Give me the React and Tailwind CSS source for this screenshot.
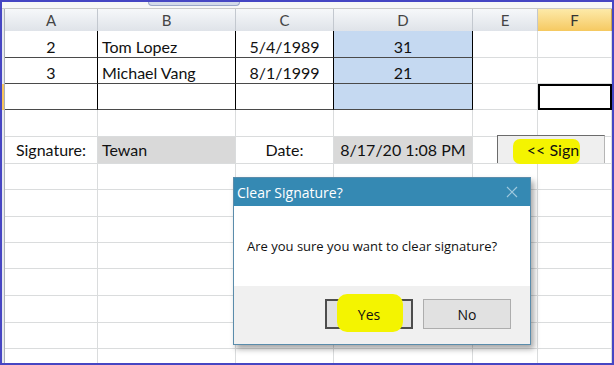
import React from 'react';

const cols = [3, 93, 138, 98, 139, 65, 74];
const rowHeights = [27, 26, 26, 27, 27, 26, 27, 26, 26, 27, 27, 26, 27];
const letters = ['A', 'B', 'C', 'D', 'E', 'F'];

// cell contents by row index (0-based data rows)
const data = {
  0: { A: '2', B: 'Tom Lopez', C: '5/4/1989', D: '31' },
  1: { A: '3', B: 'Michael Vang', C: '8/1/1999', D: '21' },
  2: {},
  4: { A: 'Signature:', B: 'Tewan', C: 'Date:', D: '8/17/20 1:08 PM' },
};

const Cell = ({ row, col, children }) => {
  const inTable = row <= 2 && col <= 3;
  const blue = row <= 2 && col === 3;
  const gray = row === 4 && (col === 1 || col === 3);
  const selected = row === 2 && col === 5;
  const align = col === 1 && children ? 'justify-start pl-[4px]' : 'justify-center';

  let cls = 'flex items-end leading-none overflow-hidden whitespace-nowrap text-[16px] text-[#111] ';
  cls += row === 4 ? 'pb-[5px] ' : 'pb-[2px] ';
  if (selected) cls += 'border-2 border-black ';
  else if (inTable) cls += 'border-r border-b border-r-black border-b-[#4a4a4a] ';
  else cls += 'border-r border-b border-[#dadcdd] ';
  if (blue) cls += 'bg-[#c5d9f1] ';
  else if (gray) cls += 'bg-[#d9d9d9] border-[#d9d9d9] ';
  else cls += 'bg-white ';

  return <div className={cls + align}>{children}</div>;
};

const App = () => {
  const template = { gridTemplateColumns: cols.map((c) => c + 'px').join(' ') };

  return (
    <div
      className="relative w-[614px] h-[365px] overflow-hidden border-2 border-[#4646c3] bg-white"
      style={{ fontFamily: 'Lato, "Open Sans", sans-serif' }}
    >
      {/* strip above the column headers */}
      <div className="h-[7px] bg-[#f7f7f7] border-b border-[#c9c9c9]"></div>

      {/* column headers */}
      <div className="grid h-[22px]" style={template}>
        <div className="bg-[#e6e9ee] border-r border-b border-[#a9afb8]"></div>
        {letters.map((l) => (
          <div
            key={l}
            className={
              'flex items-center justify-center text-[15px] border-r border-b ' +
              (l === 'F'
                ? 'bg-linear-to-b from-[#fdeaa8] to-[#f5c75c] text-[#333] border-[#c9a24c]'
                : 'bg-linear-to-b from-[#f6f8fa] to-[#dee2e8] text-[#444] border-[#c3c8cf]')
            }
          >
            {l}
          </div>
        ))}
      </div>

      {/* rows */}
      {rowHeights.map((h, r) => (
        <div key={r} className="grid" style={{ ...template, height: h }}>
          <div
            className={
              'border-r border-[#a9afb8] ' + (r === 2 ? 'bg-[#f6c55e]' : 'bg-[#e6e9ee]')
            }
          ></div>
          {letters.map((l, c) => (
            <Cell key={l} row={r} col={c}>
              {data[r] ? data[r][l] : null}
            </Cell>
          ))}
        </div>
      ))}

      {/* toolbar tab peeking from the top */}
      <div className="absolute left-[146px] top-0 w-[92px] h-[4px] rounded-b-[6px] bg-[#d3daea] border-x border-b border-[#9aa6c8]"></div>

      {/* << Sign button */}
      <div className="absolute left-[495px] top-[133px] w-[108px] h-[28px] bg-[#efefef] border-t border-l border-[#6b6b6b] border-r border-r-[#b5b5b5] flex items-center justify-center">
        <div className="absolute left-[15px] top-[3px] w-[67px] h-[25px] rounded-[7px] bg-[#f4f400]"></div>
        <span className="relative text-[16px] text-[#111] pl-[4px]">&lt;&lt; Sign</span>
      </div>

      {/* dialog */}
      <div
        className="absolute left-[231px] top-[175px] w-[298px] h-[168px] flex flex-col bg-white border border-[#5a8cab] shadow-[3px_4px_6px_rgba(0,0,0,0.35)]"
        style={{ fontFamily: '"Open Sans", "Noto Sans", sans-serif' }}
      >
        <div className="h-[28px] bg-[#3589b3] flex items-center justify-between pl-[3px] pr-[12px]">
          <span className="text-white text-[14px]">Clear Signature?</span>
          <svg width="12" height="12" viewBox="0 0 12 12" className="text-[#9fc9de]">
            <path d="M1 1L11 11M11 1L1 11" stroke="currentColor" strokeWidth="1.2" />
          </svg>
        </div>
        <div className="h-[80px] flex items-center pl-[13px] pt-[2px] text-[13px] text-[#111]">
          Are you sure you want to clear signature?
        </div>
        <div className="flex-1 bg-[#f0f0f0] flex items-start justify-end gap-[10px] pt-[13px] pr-[19px]">
          <div className="relative w-[88px] h-[30px] bg-[#e1e1e1] border-2 border-[#4d4d4d] flex items-center justify-center">
            <div className="absolute left-[10px] top-[-7px] w-[66px] h-[38px] rounded-[10px] bg-[#f4f400]"></div>
            <span className="relative text-[14px] text-[#111]">Yes</span>
          </div>
          <div className="w-[88px] h-[30px] bg-[#e1e1e1] border border-[#adadad] flex items-center justify-center text-[14px] text-[#111]">
            No
          </div>
        </div>
      </div>
    </div>
  );
};

export default App;
